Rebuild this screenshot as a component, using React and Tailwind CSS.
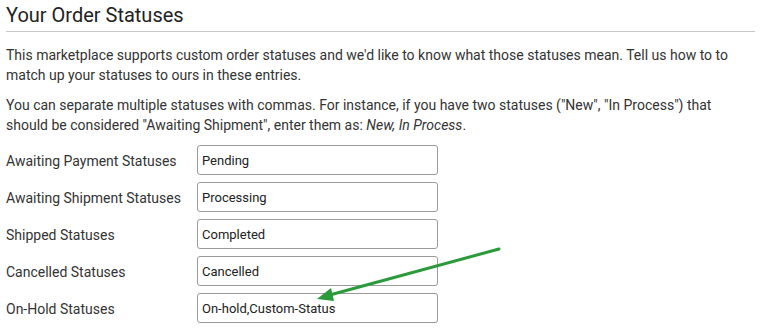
import React from 'react'

const rows = [
  ['Awaiting Payment Statuses', 'Pending'],
  ['Awaiting Shipment Statuses', 'Processing'],
  ['Shipped Statuses', 'Completed'],
  ['Cancelled Statuses', 'Cancelled'],
  ['On-Hold Statuses', 'On-hold,Custom-Status'],
]

export default function App() {
  return (
    <div className="relative w-[760px] h-[328px] bg-white text-[#333] font-['Roboto',sans-serif] overflow-hidden">
      <div className="px-[6px] pr-[5px]">
        <h2 className="text-[20px] leading-[24px] pt-[3px] pb-[4px] text-[#222] border-b border-[#c8c8c8]">
          Your Order Statuses
        </h2>
        <p className="mt-[13px] text-[14px] leading-[20px]">
          This marketplace supports custom order statuses and we'd like to know what those statuses mean. Tell us how to to
          match up your statuses to ours in these entries.
        </p>
        <p className="mt-[10px] text-[14px] leading-[20px]">
          You can separate multiple statuses with commas. For instance, if you have two statuses ("New", "In Process") that
          should be considered "Awaiting Shipment", enter them as: <em>New, In Process</em>.
        </p>
        <div className="mt-[10px] flex flex-col gap-[7px]">
          {rows.map(([label, value]) => (
            <div key={label} className="flex items-center">
              <label className="w-[191px] text-[14px] leading-[20px] pt-[2px]">{label}</label>
              <input
                readOnly
                value={value}
                className="w-[241px] h-[30px] border border-[#9a9a9a] rounded-[3px] px-[4px] text-[13px] text-[#222] outline-none"
              />
            </div>
          ))}
        </div>
      </div>
      <svg className="absolute left-0 top-0" width="760" height="328" viewBox="0 0 760 328">
        <line x1="499" y1="249" x2="326" y2="296" stroke="#2a9a3a" strokeWidth="3" strokeLinecap="round" />
        <polygon points="317,299 331,288 334,301" fill="#2a9a3a" />
      </svg>
    </div>
  )
}
